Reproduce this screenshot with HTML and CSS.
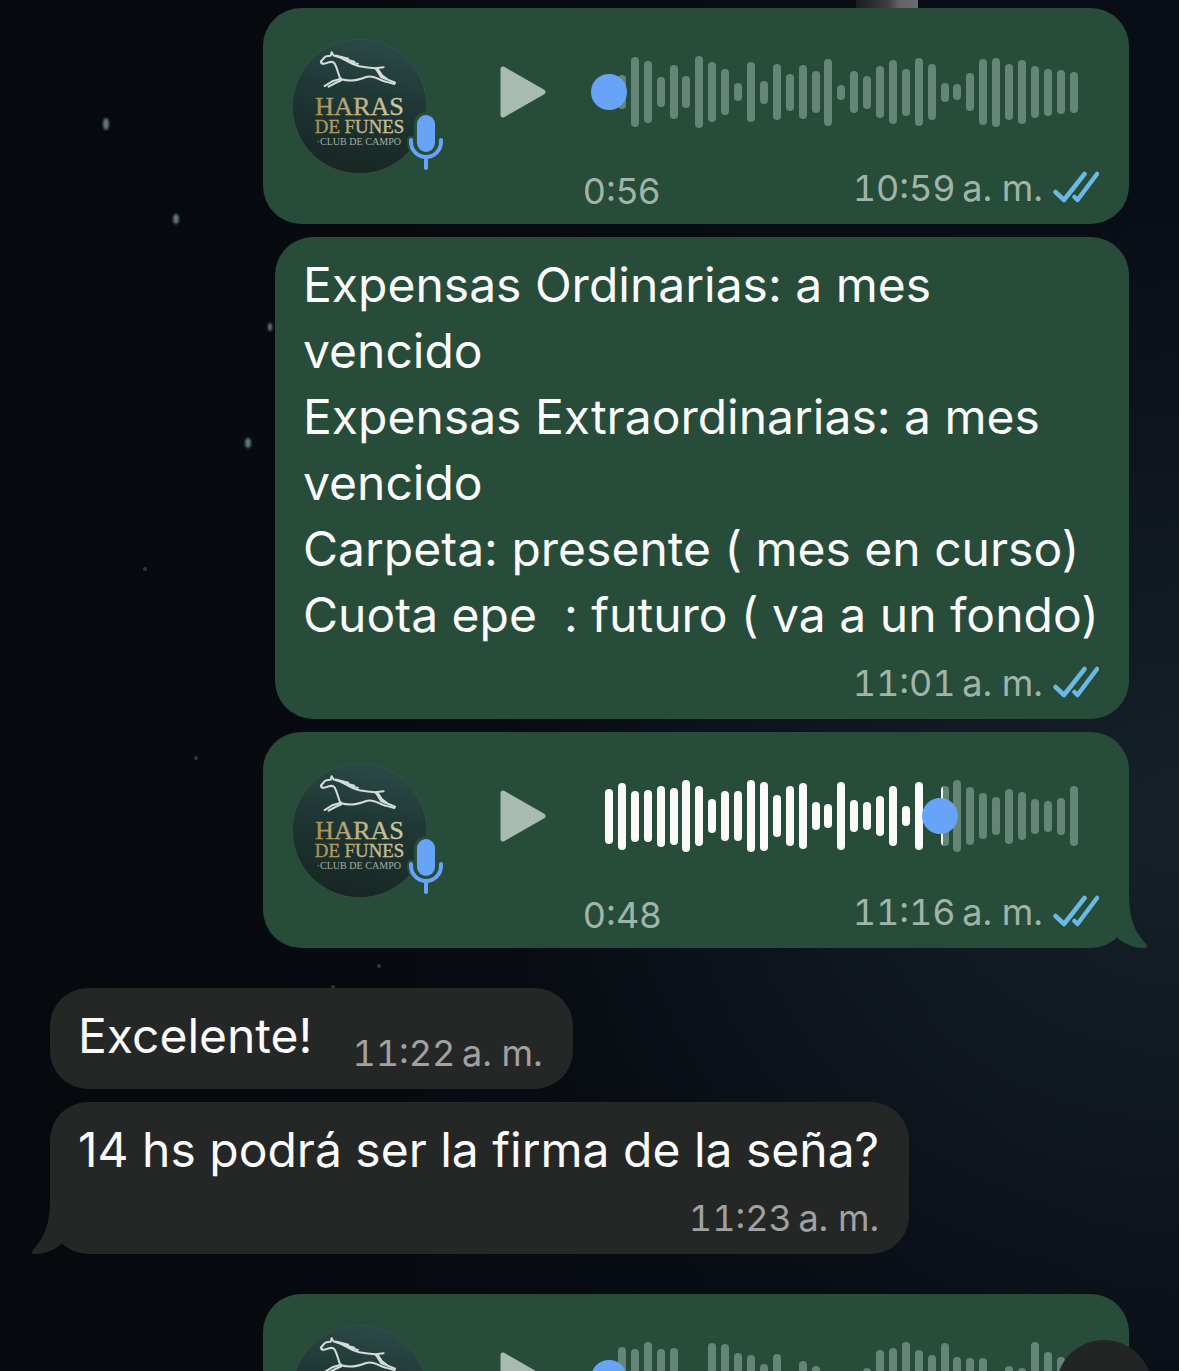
FILE: index.html
```html
<!DOCTYPE html>
<html lang="es">
<head>
    <meta charset="UTF-8">
    <title>Chat</title>
    <link rel="stylesheet" href="styles.css">
</head>
<body>
    <svg class="shapes" aria-hidden="true">
        <symbol id="horse-logo" viewBox="66 58 402 402">
            <defs>
                <linearGradient id="logoBg" x1="0.6" y1="0" x2="0.4" y2="1">
                    <stop offset="0" stop-color="#2b4a47"/>
                    <stop offset="0.4" stop-color="#1f3836"/>
                    <stop offset="1" stop-color="#172623"/>
                </linearGradient>
                <linearGradient id="gold" x1="0" y1="0" x2="1" y2="0">
                    <stop offset="0" stop-color="#a98d55"/>
                    <stop offset="0.6" stop-color="#c4b88d"/>
                    <stop offset="1" stop-color="#cfc69f"/>
                </linearGradient>
            </defs>
            <circle cx="267" cy="259" r="200" fill="url(#logoBg)" stroke="#37544c" stroke-width="2"/>
            <g fill="none" stroke="#d3dcd9" stroke-width="6" stroke-linecap="round" stroke-linejoin="round">
                <path d="M184 98l-3 10q-16 0-21 8l-8 9q1 7 9 7l15-5q12-3 17 4c8 14 10 30 17 46"/>
                <path d="M184 98l6 9q20 4 39 16t37 16q26 4 48 6l25-3"/>
                <path d="M196 106l38 10M206 112l46 13M220 118l44 14M234 126l30 11" stroke-width="4"/>
                <path d="M212 176l-24 7-25 15M213 181l-18 8-20 11"/>
                <path d="M213 178c28 8 52 2 74-7 24-7 32 8 58 14l26 7"/>
                <path d="M314 146c6 3 10 16 17 25l42 17M322 148l12 18 16 12"/>
            </g>
            <g font-family="Liberation Serif, serif" text-anchor="middle">
                <text x="267" y="283" font-size="78" fill="url(#gold)" stroke="url(#gold)">HARAS</text>
                <text x="267" y="337" font-size="56" fill="url(#gold)" stroke="url(#gold)">DE FUNES</text>
                <text x="265" y="374" font-size="30" fill="#a5ada0">·CLUB DE CAMPO</text>
            </g>
        </symbol>
        <symbol id="mic" viewBox="0 0 42 64">
            <g stroke-linecap="round" fill="none">
                <path d="M6 30v2a15 15 0 0 0 30 0v-2M21 48v10" stroke="#274c39" stroke-width="8"/>
                <path d="M21 14v19" stroke="#274c39" stroke-width="24"/>
                <path d="M21 14v19" stroke="#67a3f7" stroke-width="18"/>
                <path d="M6 30v2a15 15 0 0 0 30 0v-2M21 48v10" stroke="#67a3f7" stroke-width="4"/>
            </g>
        </symbol>
        <symbol id="play" viewBox="0 0 48 54">
            <path d="M4 4v46l40-23z" fill="#a8bbb1" stroke="#a8bbb1" stroke-width="5" stroke-linejoin="round"/>
        </symbol>
        <symbol id="read" viewBox="0 0 46 34">
            <path d="M2.500 21l8.500 8L31.500 3M21.500 26l3 3L44 3" fill="none" stroke="#69b9e3" stroke-width="4.500" stroke-linecap="round" stroke-linejoin="round"/>
        </symbol>
        <symbol id="tail" viewBox="0 0 40 60">
            <path d="M0 0H20V4C20 30 25 43 37 56Q40 60 35 60C24 60 16 56 9 50.500L0 40z"/>
        </symbol>
    </svg>

    <!-- night sky behind the chat -->
    <svg class="wallpaper" aria-hidden="true">
        <defs>
            <linearGradient id="moon">
                <stop offset="0" stop-color="#1c1c21"/>
                <stop offset="0.5" stop-color="#3d3c40"/>
                <stop offset="0.7" stop-color="#656168"/>
                <stop offset="1" stop-color="#6e6a71"/>
            </linearGradient>
        </defs>
        <rect x="856" y="0" width="62" height="20" fill="url(#moon)"/>
        <g fill="#64757e" class="stars">
            <ellipse cx="106" cy="124" rx="3" ry="6"/>
            <ellipse cx="176" cy="219" rx="3" ry="5"/>
            <ellipse cx="270" cy="327" rx="2" ry="4"/>
            <ellipse cx="248" cy="443" rx="3" ry="5"/>
        </g>
        <g fill="#2d383f">
            <circle cx="145" cy="569" r="2"/>
            <circle cx="196" cy="758" r="2"/>
            <circle cx="379" cy="966" r="2"/>
            <circle cx="333" cy="987" r="2"/>
        </g>
    </svg>

    <main class="chat">
        <div class="bubble sent voice">
            <div class="avatar">
                <svg class="logo" role="img" aria-label="Haras de Funes"><use href="#horse-logo"/></svg>
                <svg class="mic"><use href="#mic"/></svg>
            </div>
            <button class="play" aria-label="Reproducir"><svg><use href="#play"/></svg></button>
            <div class="audio">
                <div class="wave" data-levels="20,34,70,62,30,54,32,72,60,46,18,60,23,56,37,54,42,67,15,42,33,52,64,47,68,56,19,16,38,66,69,56,64,52,47,44,41">
                    <input type="range" min="0" max="1000" value="0" aria-label="Posición del audio">
                </div>
                <div class="audio-info">
                    <span class="duration">0:56</span>
                    <span class="meta">10:59&#8239;a. m. <svg class="read"><use href="#read"/></svg></span>
                </div>
            </div>
        </div>

        <div class="bubble sent">
            <p>Expensas Ordinarias: a mes vencido
Expensas Extraordinarias: a mes vencido
Carpeta: presente ( mes en curso)
Cuota epe  : futuro ( va a un fondo)</p>
            <span class="meta">11:01&#8239;a. m. <svg class="read"><use href="#read"/></svg></span>
        </div>

        <div class="bubble sent voice last">
            <div class="avatar">
                <svg class="logo" role="img" aria-label="Haras de Funes"><use href="#horse-logo"/></svg>
                <svg class="mic"><use href="#mic"/></svg>
            </div>
            <button class="play" aria-label="Reproducir"><svg><use href="#play"/></svg></button>
            <div class="audio">
                <div class="wave" data-levels="55,67,51,52,61,57,72,60,34,50,50,72,69,42,60,66,28,24,68,32,28,40,60,20,68,16,60,72,58,46,38,55,48,35,31,37,60">
                    <input type="range" min="0" max="1000" value="712" aria-label="Posición del audio">
                </div>
                <div class="audio-info">
                    <span class="duration">0:48</span>
                    <span class="meta">11:16&#8239;a. m. <svg class="read"><use href="#read"/></svg></span>
                </div>
            </div>
            <svg class="tail"><use href="#tail"/></svg>
        </div>

        <div class="bubble received short">
            <p>Excelente!</p>
            <span class="meta">11:22&#8239;a. m.</span>
        </div>

        <div class="bubble received last">
            <p>14 hs podrá ser la firma de la seña?</p>
            <span class="meta">11:23&#8239;a. m.</span>
            <svg class="tail"><use href="#tail"/></svg>
        </div>

        <div class="bubble sent voice">
            <div class="avatar">
                <svg class="logo" role="img" aria-label="Haras de Funes"><use href="#horse-logo"/></svg>
                <svg class="mic"><use href="#mic"/></svg>
            </div>
            <button class="play" aria-label="Reproducir"><svg><use href="#play"/></svg></button>
            <div class="audio">
                <div class="wave" data-levels="20,62,58,72,58,60,14,14,70,69,51,46,28,48,14,34,25,14,14,14,20,57,61,72,57,46,70,43,41,41,14,24,20,72,52,43,40">
                    <input type="range" min="0" max="1000" value="0" aria-label="Posición del audio">
                </div>
            </div>
        </div>
    </main>

    <button class="scroll-down" aria-label="Ir al final"></button>

    <script src="script.js"></script>
</body>
</html>
```
FILE: styles.css
```css
* {
    box-sizing: border-box;
}
body {
    margin: 0;
    height: 100vh;
    overflow: hidden;
    position: relative;
    font-family: Inter, "Liberation Sans", sans-serif;
    color: #fafafa;
    background-color: #070b11;
    background-image:
        radial-gradient(ellipse 60% 45% at 100% 60%, #162129, transparent),
        linear-gradient(to right, #060a0e, #090d16);
}
.shapes {
    position: absolute;
    width: 0;
    height: 0;
}
.wallpaper {
    position: absolute;
    top: 0;
    left: 0;
    width: 100%;
    height: 100%;
}
.stars {
    filter: blur(1px);
}
.chat {
    position: relative;
    display: flex;
    flex-direction: column;
    gap: 13px;
    padding: 8px 50px;
}

/* bubbles */
.bubble {
    position: relative;
    display: flex;
    flex-direction: column;
    max-width: 854px;
    padding: 15px 30px 14px 28px;
    border-radius: 38px;
}
.sent {
    align-self: flex-end;
    background-color: #274c39;
}
.received {
    align-self: flex-start;
    max-width: 866px;
    background-color: #252726;
}
.bubble.last {
    margin-bottom: 27px;
}
.bubble p {
    margin: 0;
    font-size: 48px;
    line-height: 66px;
    white-space: pre-wrap;
}
.meta {
    display: flex;
    align-items: center;
    align-self: flex-end;
    gap: 10px;
    margin-top: 13px;
    font-size: 36px;
    line-height: 44px;
    font-variant-numeric: tabular-nums;
    color: #a0b4a9;
}
.received .meta {
    color: #a1a1a1;
}
.read {
    width: 46px;
    height: 34px;
}
.bubble.short {
    flex-direction: row;
    gap: 40px;
}
.short .meta {
    margin-top: 28px;
}
.tail {
    position: absolute;
    bottom: 0;
    width: 40px;
    height: 60px;
}
.sent .tail {
    right: -20px;
    fill: #274c39;
}
.received .tail {
    left: -20px;
    fill: #252726;
    transform: scaleX(-1);
}

/* voice messages */
.bubble.voice {
    flex-direction: row;
    align-items: flex-start;
    width: 100%;
    max-width: 866px;
    min-height: 216px;
    padding: 31px 30px 8px 29px;
}
.avatar {
    position: relative;
    width: 135px;
    height: 135px;
}
.logo {
    display: block;
    width: 100%;
    height: 100%;
}
.mic {
    position: absolute;
    right: -20px;
    bottom: 0;
    width: 42px;
    height: 64px;
}
.play {
    display: flex;
    align-items: center;
    height: 72px;
    margin: 17px 36px 0 72px;
    padding: 0;
    border: none;
    background: none;
    cursor: pointer;
}
.play svg {
    width: 48px;
    height: 54px;
}
.audio {
    flex: 1;
    padding-top: 17px;
}
.wave {
    position: relative;
    display: flex;
    align-items: center;
    justify-content: space-between;
    height: 72px;
    margin: 0 21px 0 22px;
}
.bar {
    width: 8px;
    border-radius: 4px;
    background-color: #658577;
}
.wave input {
    appearance: none;
    position: absolute;
    top: 0;
    left: -14px;
    width: calc(100% + 28px);
    height: 100%;
    margin: 0;
    background: none;
    cursor: pointer;
}
.wave input::-webkit-slider-thumb {
    appearance: none;
    width: 36px;
    height: 36px;
    border-radius: 50%;
    background-color: #67a3f7;
}
.audio-info {
    display: flex;
    justify-content: space-between;
    align-items: flex-start;
    margin-top: 38px;
}
.duration {
    font-size: 36px;
    line-height: 50px;
    color: #a0b4a9;
}
.audio-info .meta {
    align-self: flex-start;
    margin-top: 0;
}

.scroll-down {
    position: fixed;
    right: 27px;
    bottom: -65px;
    width: 96px;
    height: 96px;
    border: none;
    border-radius: 50%;
    background-color: #232524;
    cursor: pointer;
}
```
FILE: script.js
```javascript
function paintWave(wave) {
    var bars = wave.querySelectorAll(".bar");
    var pos = wave.querySelector("input").value / 1000 * (bars.length - 1);
    bars.forEach(function (bar, i) {
        // part of this bar that was already played
        var done = Math.max(0, Math.min(1, (pos - i) * 1.6 + 0.8));
        bar.style.background = done > 0 && pos > 0
            ? "linear-gradient(to right, #fafafa " + done * 100 + "%, #658577 " + done * 100 + "%)"
            : "";
    });
}

document.querySelectorAll(".wave").forEach(function (wave) {
    var input = wave.querySelector("input");
    wave.dataset.levels.split(",").forEach(function (level) {
        var bar = document.createElement("span");
        bar.className = "bar";
        bar.style.height = level + "px";
        wave.insertBefore(bar, input);
    });
    input.addEventListener("input", function () {
        paintWave(wave);
    });
    paintWave(wave);
});
```
